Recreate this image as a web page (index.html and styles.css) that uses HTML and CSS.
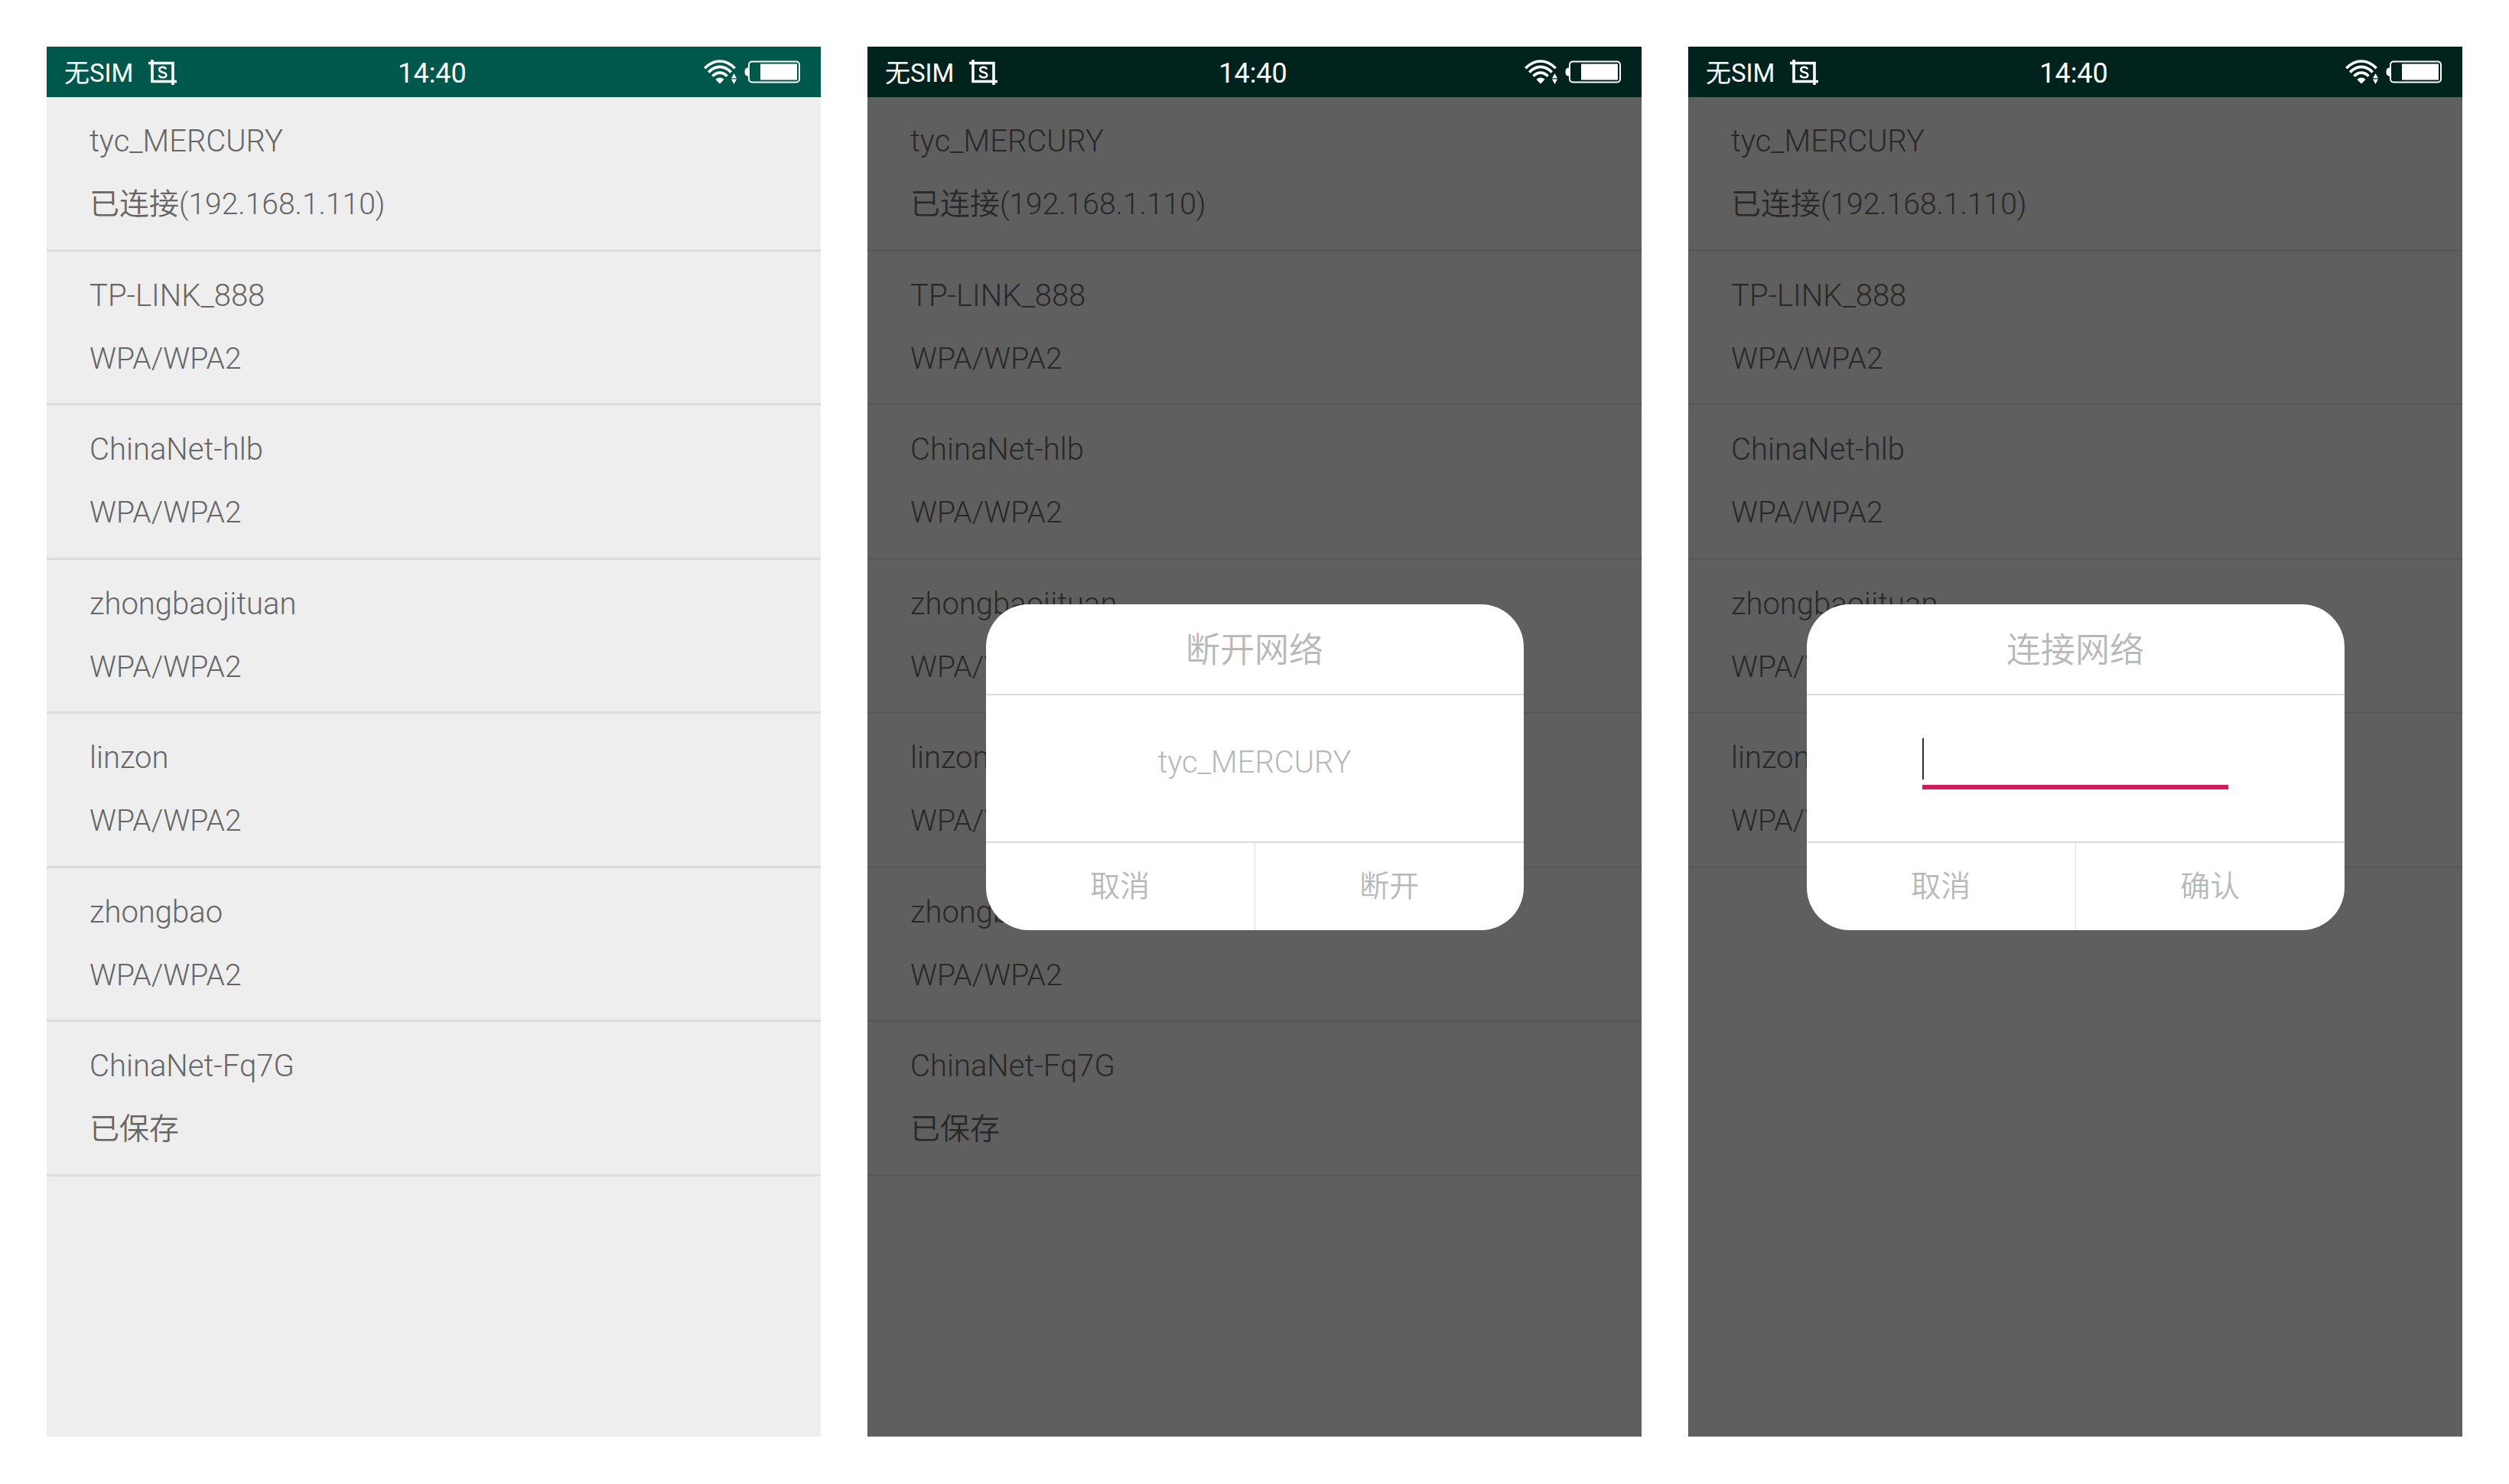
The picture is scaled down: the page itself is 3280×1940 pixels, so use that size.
FILE: index.html
```html
<!DOCTYPE html>
<html lang="zh-CN">
<head>
<meta charset="utf-8">
<meta name="viewport" content="width=device-width, initial-scale=1">
<title>WiFi</title>
<link rel="stylesheet" href="styles.css">
</head>
<body>
<svg class="sprite" aria-hidden="true">
  <symbol id="icon-shot" viewBox="0 0 37 33">
    <path d="M5 0V28.500H37M0 4.500H32V33" fill="none" stroke="#fff" stroke-width="3.600"/>
    <path d="M23 12.500C22.500 10.500 20.800 9.700 18.600 9.700C16 9.700 14.300 11 14.300 13C14.300 15 15.800 15.800 18.600 16.400C21.600 17 23.300 18 23.300 20C23.300 22.200 21.500 23.300 18.700 23.300C16 23.300 14.200 22.200 13.800 20" fill="none" stroke="#fff" stroke-width="2.600"/>
  </symbol>
  <symbol id="icon-wifi" viewBox="0 0 44 32">
    <g fill="none" stroke="#fff" stroke-width="3.600">
      <path d="M1.300 11.300C13 -1.200 29 -1.200 40.700 11.300"/>
      <path d="M6.300 16.500C15 7 27 7 35.700 16.500"/>
      <path d="M11.500 21.600C17 15.600 25 15.600 30.500 21.600"/>
    </g>
    <path d="M15.500 26C19 22.800 23 22.800 26.500 26L21 31.500ZM39.500 18L43 24.300H36ZM36 25.600H43L39.500 32Z" fill="#fff"/>
  </symbol>
  <symbol id="icon-battery" viewBox="0 0 73 30">
    <path d="M5 9.500C1.500 9.500 0.500 12 0.500 15S1.500 20.500 5 20.500Z" fill="#fff"/>
    <rect x="6" y="1.500" width="66" height="27" rx="4" fill="none" stroke="#fff" stroke-width="2"/>
    <rect x="21" y="4.500" width="48" height="21" fill="#fff"/>
  </symbol>
</svg>
<main class="screens">
  <section class="phone">
    <header class="status">
      <div class="status-left"><span class="sim">无SIM</span><svg class="shot"><use href="#icon-shot"/></svg></div>
      <time class="clock">14:40</time>
      <div class="status-right"><svg class="wifi"><use href="#icon-wifi"/></svg><svg class="battery"><use href="#icon-battery"/></svg></div>
    </header>
    <div class="content">
      <ul class="networks">
        <li class="network"><span class="ssid">tyc_MERCURY</span><span class="state">已连接(192.168.1.110)</span></li>
        <li class="network"><span class="ssid">TP-LINK_888</span><span class="state">WPA/WPA2</span></li>
        <li class="network"><span class="ssid">ChinaNet-hlb</span><span class="state">WPA/WPA2</span></li>
        <li class="network"><span class="ssid">zhongbaojituan</span><span class="state">WPA/WPA2</span></li>
        <li class="network"><span class="ssid">linzon</span><span class="state">WPA/WPA2</span></li>
        <li class="network"><span class="ssid">zhongbao</span><span class="state">WPA/WPA2</span></li>
        <li class="network"><span class="ssid">ChinaNet-Fq7G</span><span class="state">已保存</span></li>
      </ul>
    </div>
  </section>

  <section class="phone dimmed">
    <header class="status">
      <div class="status-left"><span class="sim">无SIM</span><svg class="shot"><use href="#icon-shot"/></svg></div>
      <time class="clock">14:40</time>
      <div class="status-right"><svg class="wifi"><use href="#icon-wifi"/></svg><svg class="battery"><use href="#icon-battery"/></svg></div>
    </header>
    <div class="content">
      <ul class="networks">
        <li class="network"><span class="ssid">tyc_MERCURY</span><span class="state">已连接(192.168.1.110)</span></li>
        <li class="network"><span class="ssid">TP-LINK_888</span><span class="state">WPA/WPA2</span></li>
        <li class="network"><span class="ssid">ChinaNet-hlb</span><span class="state">WPA/WPA2</span></li>
        <li class="network"><span class="ssid">zhongbaojituan</span><span class="state">WPA/WPA2</span></li>
        <li class="network"><span class="ssid">linzon</span><span class="state">WPA/WPA2</span></li>
        <li class="network"><span class="ssid">zhongbao</span><span class="state">WPA/WPA2</span></li>
        <li class="network"><span class="ssid">ChinaNet-Fq7G</span><span class="state">已保存</span></li>
      </ul>
      <div class="overlay">
        <div class="dialog" role="dialog" aria-labelledby="disconnect-title">
          <h2 class="dialog-title" id="disconnect-title">断开网络</h2>
          <div class="dialog-body"><p class="dialog-name">tyc_MERCURY</p></div>
          <div class="dialog-actions"><button type="button" class="action">取消</button><button type="button" class="action">断开</button></div>
        </div>
      </div>
    </div>
  </section>

  <section class="phone dimmed">
    <header class="status">
      <div class="status-left"><span class="sim">无SIM</span><svg class="shot"><use href="#icon-shot"/></svg></div>
      <time class="clock">14:40</time>
      <div class="status-right"><svg class="wifi"><use href="#icon-wifi"/></svg><svg class="battery"><use href="#icon-battery"/></svg></div>
    </header>
    <div class="content">
      <ul class="networks">
        <li class="network"><span class="ssid">tyc_MERCURY</span><span class="state">已连接(192.168.1.110)</span></li>
        <li class="network"><span class="ssid">TP-LINK_888</span><span class="state">WPA/WPA2</span></li>
        <li class="network"><span class="ssid">ChinaNet-hlb</span><span class="state">WPA/WPA2</span></li>
        <li class="network"><span class="ssid">zhongbaojituan</span><span class="state">WPA/WPA2</span></li>
        <li class="network"><span class="ssid">linzon</span><span class="state">WPA/WPA2</span></li>
      </ul>
      <div class="overlay">
        <form class="dialog" role="dialog" aria-labelledby="connect-title">
          <h2 class="dialog-title" id="connect-title">连接网络</h2>
          <div class="dialog-body"><div class="field"><input class="password" type="password" aria-labelledby="connect-title"><span class="caret"></span></div></div>
          <div class="dialog-actions"><button type="button" class="action">取消</button><button type="button" class="action">确认</button></div>
        </form>
      </div>
    </div>
  </section>
</main>
</body>
</html>
```
FILE: styles.css
```css
* { box-sizing: border-box; }

body {
  margin: 0;
  background: #fff;
  font-family: Roboto, "Noto Sans CJK SC", sans-serif;
  font-weight: 350;
}

.sprite { position: absolute; width: 0; height: 0; }

.screens {
  display: grid;
  grid-template-columns: repeat(3, 1fr);
  gap: 61px;
  min-height: 100vh;
  padding: 61px 61px 62px;
}

.phone {
  display: flex;
  flex-direction: column;
  background: #eee;
  color: #666;
}

.status {
  display: grid;
  grid-template-columns: 1fr auto 1fr;
  align-items: center;
  height: 66px;
  padding: 0 27px 0 23px;
  background: #00574b;
  color: #fff;
  font-weight: 400;
}

.status-left, .status-right { display: flex; align-items: center; }
.status-left { gap: 20px; }
.status-right { justify-content: flex-end; gap: 9px; }
.sim, .clock { padding-top: 3px; line-height: 40px; }
.sim { font-size: 33px; }
.clock { font-size: 36px; }
.shot { width: 37px; height: 33px; }
.wifi { width: 44px; height: 32px; }
.battery { width: 73px; height: 30px; }

.content { position: relative; flex: 1; }

.networks {
  display: grid;
  grid-template-rows: repeat(7, 1fr);
  min-height: 1411px;
  margin: 0;
  padding: 0;
  list-style: none;
}

.network {
  display: flex;
  flex-direction: column;
  padding: 16px 56px 0;
  border-bottom: 3px solid #dcdcdc;
}

.ssid { font-size: 40px; line-height: 84px; }
.state { font-size: 39px; line-height: 80px; }

.dimmed { background: #5f5f5f; color: #282828; }
.dimmed .status { background: #00231e; }
.dimmed .network { border-color: #585858; }

.overlay {
  position: absolute;
  inset: 0;
  display: flex;
  align-items: center;
  justify-content: center;
}

.dialog {
  width: 703px;
  max-width: 90%;
  overflow: hidden;
  border-radius: 56px;
  background: #fff;
  color: #b8b8b8;
}

.dialog-title {
  margin: 0;
  padding: 31px 0 26px;
  border-bottom: 2px solid #ddd;
  font-size: 45px;
  font-weight: inherit;
  line-height: 60px;
  text-align: center;
}

.dialog-body {
  display: flex;
  justify-content: center;
  padding: 56px 0 68px;
  border-bottom: 2px solid #ddd;
}

.dialog-name { margin: 0; font-size: 40px; line-height: 64px; padding-bottom: 3px; }

.field { position: relative; width: 400px; }

.password {
  display: block;
  width: 100%;
  height: 67px;
  padding: 0;
  border: 0;
  border-bottom: 6px solid #d81b60;
  outline: 0;
  background: none;
  font-size: 40px;
}

.caret {
  position: absolute;
  top: 0;
  left: 0;
  width: 2px;
  height: 54px;
  background: #263238;
}

.dialog-actions { display: grid; grid-template-columns: 1fr 1fr; }

.action {
  padding: 27px 0;
  border: 0;
  background: none;
  color: inherit;
  font-family: inherit;
  font-size: 39px;
  font-weight: inherit;
  line-height: 60px;
}

.action + .action { border-left: 1px solid #ddd; }
```
